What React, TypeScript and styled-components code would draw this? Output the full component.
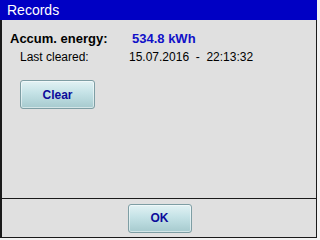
import styled, { createGlobalStyle } from 'styled-components';

const GlobalStyle = createGlobalStyle`
  html, body {
    margin: 0;
    padding: 0;
    background: #f2f2f2;
  }
  body {
    font-family: "Liberation Sans", Arial, sans-serif;
  }
`

const Dialog = styled.div`
  width: 317px;
  height: 238px;
  display: flex;
  flex-direction: column;
`

const TitleBar = styled.div`
  height: 20px;
  background: #0000c4;
  color: #fff;
  font-size: 14px;
  line-height: 20px;
  padding-left: 7px;
`

const Body = styled.div`
  flex: 1;
  display: flex;
  flex-direction: column;
  background: #e0e0e0;
  border-left: 2px solid #1a1a1a;
  border-right: 1px solid #1a1a1a;
  border-bottom: 1px solid #1a1a1a;
`

const Content = styled.div`
  flex: 1;
  padding: 10px 0 0 8px;
`

const Row = styled.div<{ $indent: number; $labelWidth: number; $bold?: boolean }>`
  display: flex;
  align-items: baseline;
  height: 18px;
  line-height: 18px;
  padding-left: ${p => p.$indent}px;
  font-size: ${p => (p.$bold ? 13 : 12)}px;
  span:first-child {
    width: ${p => p.$labelWidth}px;
    font-weight: ${p => (p.$bold ? 'bold' : 'normal')};
    color: #000;
  }
`

const Value = styled.span<{ $accent?: boolean }>`
  white-space: pre;
  color: ${p => (p.$accent ? '#1010c8' : '#000')};
  font-weight: ${p => (p.$accent ? 'bold' : 'normal')};
`

const Button = styled.button<{ $width: number }>`
  width: ${p => p.$width}px;
  height: 29px;
  border: 1px solid #7e9ea4;
  border-radius: 3px;
  background: linear-gradient(#e2f2f4, #c4e2e6 45%, #a6cace);
  color: #0c0c9a;
  font-family: "Liberation Sans", Arial, sans-serif;
  font-weight: bold;
  font-size: 12px;
  padding: 0;
  box-shadow: inset 0 0 0 1px rgba(255,255,255,0.5);
`

const ClearWrap = styled.div`
  padding: 14px 0 0 10px;
`

const Footer = styled.div`
  height: 38px;
  border-top: 1px solid #1a1a1a;
  display: flex;
  align-items: center;
  justify-content: center;
  padding-left: 1px;
`

export default function App() {
  return (
    <>
      <GlobalStyle />
      <Dialog>
        <TitleBar>Records</TitleBar>
        <Body>
          <Content>
            <Row $indent={0} $labelWidth={122} $bold>
              <span>Accum. energy:</span>
              <Value $accent>534.8 kWh</Value>
            </Row>
            <Row $indent={10} $labelWidth={109}>
              <span>Last cleared:</span>
              <Value>15.07.2016  -  22:13:32</Value>
            </Row>
            <ClearWrap>
              <Button $width={75}>Clear</Button>
            </ClearWrap>
          </Content>
          <Footer>
            <Button $width={64}>OK</Button>
          </Footer>
        </Body>
      </Dialog>
    </>
  )
}
